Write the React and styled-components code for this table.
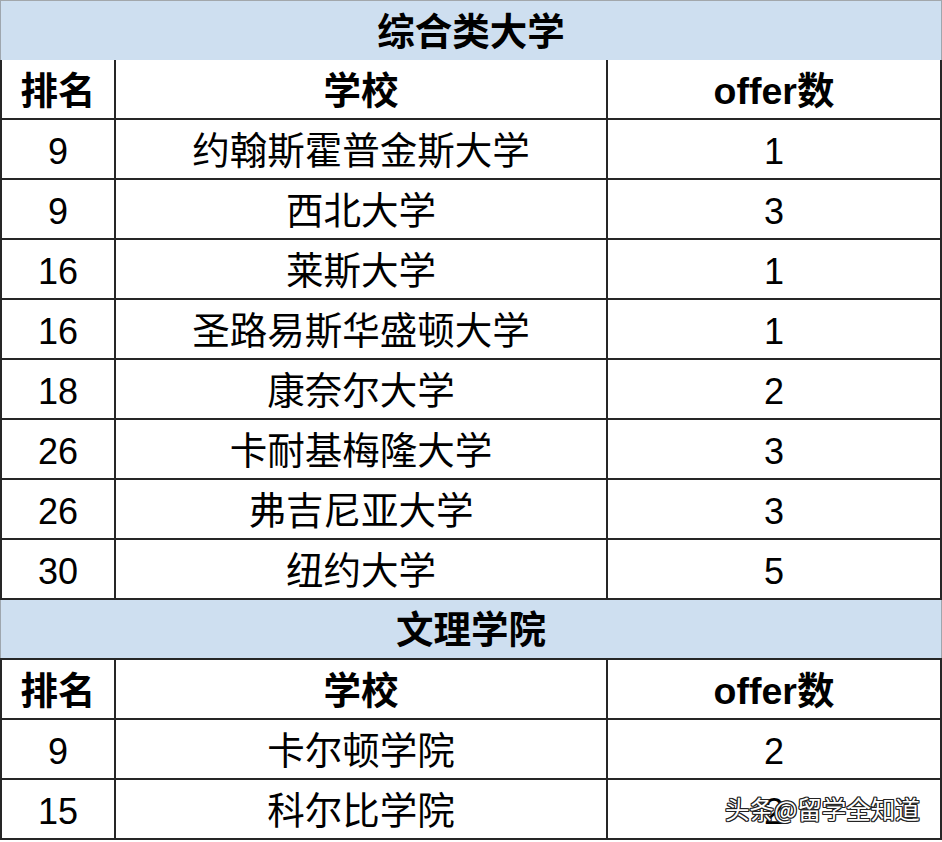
import React from "react";
import styled, { createGlobalStyle } from "styled-components";

const GlobalStyle = createGlobalStyle`
  html, body {
    margin: 0;
    padding: 0;
    background: #ffffff;
  }
  body {
    font-family: "Liberation Sans", "Noto Sans CJK SC", sans-serif;
    color: #000;
  }
`;

const sections = [
  {
    title: "综合类大学",
    rows: [
      ["9", "约翰斯霍普金斯大学", "1"],
      ["9", "西北大学", "3"],
      ["16", "莱斯大学", "1"],
      ["16", "圣路易斯华盛顿大学", "1"],
      ["18", "康奈尔大学", "2"],
      ["26", "卡耐基梅隆大学", "3"],
      ["26", "弗吉尼亚大学", "3"],
      ["30", "纽约大学", "5"],
    ],
  },
  {
    title: "文理学院",
    rows: [
      ["9", "卡尔顿学院", "2"],
      ["15", "科尔比学院", "2"],
    ],
  },
];

const Page = styled.div`
  position: relative;
  width: 942px;
  height: 842px;
  overflow: hidden;
`;

const Grid = styled.div`
  display: grid;
  grid-template-columns: 112px 490px 1fr;
  grid-auto-rows: 58px;
  gap: 2px;
  padding: 0 2px 2px;
  background: #262626;
  width: 942px;
  box-sizing: border-box;
`;

const Cell = styled.div`
  background: #ffffff;
  display: flex;
  align-items: center;
  justify-content: center;
  font-size: ${(p) => (p.$cjk ? "37.5px" : "36px")};
  font-weight: ${(p) => (p.$bold ? 700 : 400)};
  line-height: 1;
  padding-top: 5px;
  box-sizing: border-box;
`;

const SectionTitle = styled.div`
  grid-column: 1 / -1;
  margin: 0 -2px;
  background: #cedff0;
  border-left: 1px solid #9ea6ae;
  border-right: 1px solid #9ea6ae;
  border-top: ${(p) => (p.$first ? "1px solid #a2a7ab" : "none")};
  height: ${(p) => (p.$first ? "60px" : "58px")};
  display: flex;
  align-items: center;
  justify-content: center;
  font-size: 37.5px;
  font-weight: 700;
  line-height: 1;
  box-sizing: border-box;
  padding-top: 4px;
`;

const Watermark = styled.div`
  position: absolute;
  left: 725px;
  top: 791px;
  font-family: "Noto Sans CJK SC", sans-serif;
  font-size: 24.5px;
  color: #ffffff;
  text-shadow: -1px -1px 0 #222, 1px -1px 0 #222, -1px 1px 0 #222,
    1px 1px 0 #222, 0 1px 0 #222, 0 -1px 0 #222, 1px 0 0 #222, -1px 0 0 #222;
`;

const isCjk = (s) => /[\u4e00-\u9fff]/.test(s);

export default function App() {
  return (
    <Page>
      <GlobalStyle />
      <Grid>
        {sections.map((section, si) => (
          <React.Fragment key={section.title}>
            <SectionTitle $first={si === 0}>{section.title}</SectionTitle>
            <Cell $bold $cjk>排名</Cell>
            <Cell $bold $cjk>学校</Cell>
            <Cell $bold $cjk>offer数</Cell>
            {section.rows.map((row, ri) =>
              row.map((val, ci) => (
                <Cell key={`${ri}-${ci}`} $cjk={isCjk(val)}>
                  {val}
                </Cell>
              ))
            )}
          </React.Fragment>
        ))}
      </Grid>
      <Watermark>头条@留学全知道</Watermark>
    </Page>
  );
}
